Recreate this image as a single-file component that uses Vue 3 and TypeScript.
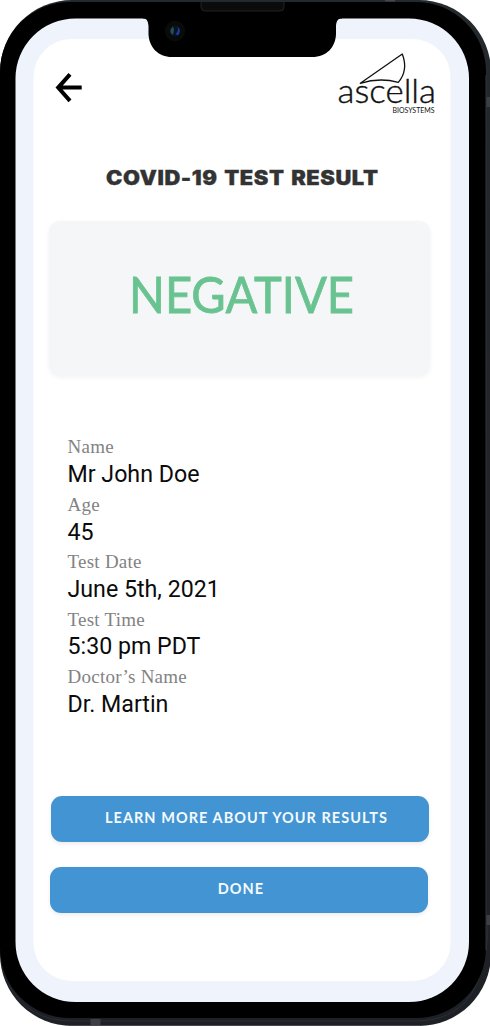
<script setup lang="ts">
interface Detail {
  label: string
  value: string
}

const details: Detail[] = [
  { label: 'Name', value: 'Mr John Doe' },
  { label: 'Age', value: '45' },
  { label: 'Test Date', value: 'June 5th, 2021' },
  { label: 'Test Time', value: '5:30 pm PDT' },
  { label: 'Doctor’s Name', value: 'Dr. Martin' },
]
</script>

<template>
  <div class="phone">
    <svg class="shell" viewBox="0 0 490 1026" aria-hidden="true">
      <defs>
        <linearGradient id="edge" x1="0" y1="0" x2="0" y2="1">
          <stop offset="0" stop-color="#24292d" />
          <stop offset="1" stop-color="#1d2024" />
        </linearGradient>
      </defs>
      <rect x="0" y="0" width="491" height="1026" rx="72" fill="url(#edge)" />
      <path d="M70 1025.5H420" stroke="#4b464e" stroke-width="1" />
      <path d="M488 920Q488 1021 416 1021H72Q28 1021 9 985" fill="none" stroke="#2b2f34" stroke-width="1" />
      <rect x="0" y="2" width="486" height="1016" rx="70" fill="#000" />
      <path d="M486 75V950" stroke="#303439" stroke-width="1" />
      <path d="M385 .5h10" stroke="#43474b" stroke-width="2" />
      <rect x="90.500" y="1019" width="10" height="6" fill="#3c3f43" />
      <rect x="486.500" y="97" width="3.500" height="10" fill="#3c3f43" />
      <rect x="486.500" y="915" width="3.500" height="10" fill="#3c3f43" />
      <rect x="15.500" y="18.500" width="453.500" height="983.500" rx="60" fill="#eff3fc" />
      <rect x="33.500" y="39" width="417" height="942" rx="38" fill="#fff" />
      <path d="M143 17.500V18.500C147 18.500 148 21 148.500 26V34C149 47 158 57 172 57H312C327 57 335.500 47 336 34V26C336.500 21 337.500 18.500 342 18.500V17.500Z" fill="#000" />
      <path d="M201 2V7Q201 11 205 11H280Q284 11 284 7V2" fill="#0b0b0b" stroke="#222" stroke-width="1" />
      <circle cx="175" cy="31" r="10.300" fill="#0a0a0b" />
      <circle cx="175" cy="31" r="5.500" fill="#071323" />
      <path d="M173 26.500Q168 31 172.500 35Q175 31 173 26.500" fill="#20534f" />
      <path d="M177.500 26.500Q182 31 178 35.500L175.500 34Q179 31 177.500 26.500" fill="#183e9c" />
    </svg>

    <main class="screen">
      <header class="top">
        <button class="back" aria-label="Back">
          <svg width="28" height="30" viewBox="0 0 28 30">
            <path d="M26.700 14.600H4M15 1.400L3.200 14.600L15 27.800" fill="none" stroke="#000" stroke-width="4" />
          </svg>
        </button>
        <svg class="logo" width="105" height="68" viewBox="0 0 105 68" role="img" aria-label="ascella biosystems">
          <path d="M25.300 33.300L67.300 4C71.500 15 70 24.500 63.300 32.300C51 29 39 29 25.300 33.300Z" fill="none" stroke="#111" stroke-width="1.300" stroke-linejoin="round" />
          <text class="brand" x="2.500" y="53" textLength="98.500" lengthAdjust="spacingAndGlyphs">ascella</text>
          <text class="sub" x="57.500" y="62.500" textLength="42" lengthAdjust="spacingAndGlyphs">BIOSYSTEMS</text>
        </svg>
      </header>

      <svg class="title" width="280" height="24" viewBox="0 0 280 24">
        <text x="1" y="19.600" textLength="272.500" lengthAdjust="spacingAndGlyphs">COVID-19 TEST RESULT</text>
      </svg>

      <section class="result">
        <svg width="240" height="70" viewBox="0 0 240 70">
          <text x="0" y="45.500" textLength="225" lengthAdjust="spacingAndGlyphs">NEGATIVE</text>
        </svg>
      </section>

      <dl class="details">
        <template v-for="item in details" :key="item.label">
          <dt>{{ item.label }}</dt>
          <dd>{{ item.value }}</dd>
        </template>
      </dl>

      <div class="actions">
        <button class="action more"><span>LEARN MORE ABOUT YOUR RESULTS</span></button>
        <button class="action done"><span>DONE</span></button>
      </div>
    </main>
  </div>
</template>

<style>
body {
  margin: 0;
  background: #fff;
}
</style>

<style scoped>
.phone {
  position: relative;
  width: 490px;
  height: 1026px;
  overflow: hidden;
}
.shell {
  position: absolute;
  inset: 0;
  width: 490px;
  height: 1026px;
}
.screen {
  position: relative;
  box-sizing: border-box;
  height: 1026px;
  padding: 50px 50px 0 49px;
  display: flex;
  flex-direction: column;
}
.top {
  display: flex;
  justify-content: space-between;
  height: 115px;
}
.back {
  width: 28px;
  height: 30px;
  margin: 23px 0 0 6px;
  padding: 0;
  border: 0;
  background: none;
}
.back svg {
  display: block;
}
.logo,
.title,
.result svg {
  overflow: visible;
}
.brand {
  font: 300 34px Lato, sans-serif;
  fill: #111;
  stroke: #111;
  stroke-width: 0.400px;
}
.sub {
  font: 7.600px Lato, sans-serif;
  fill: #111;
}
.title {
  margin-left: 56px;
  flex: none;
}
.title text {
  font: 900 19.500px Inter, sans-serif;
  letter-spacing: 0.500px;
  word-spacing: 1.500px;
  fill: #333;
  stroke: #333;
  stroke-width: 0.300px;
}
.result {
  box-sizing: border-box;
  width: 381.500px;
  height: 154px;
  margin: 32px 0 0 -0.500px;
  padding: 46px 0 0 80px;
  border-radius: 11px;
  background: #f4f6f8;
  box-shadow: 0 2px 5px rgba(0, 0, 0, 0.060);
}
.result svg {
  display: block;
}
.result text {
  font: 50px Lato, sans-serif;
  fill: #69c391;
  stroke: #69c391;
  stroke-width: 0.800px;
}
.details {
  margin: 56px 0 0 18.500px;
  display: grid;
  grid-template-rows: 29px 29px 29px 28px 29px 29px 28px 29px 29px 28px;
}
.details dt {
  margin: 0;
  font: 19px/31px "Liberation Serif", serif;
  letter-spacing: 0.250px;
  color: #828282;
}
.details dd {
  margin: 0;
  font: 23.200px/28px Roboto, sans-serif;
  color: #0b0b0b;
}
.actions {
  margin-top: 77.500px;
  display: flex;
  flex-direction: column;
  gap: 25px;
}
.action {
  width: 378px;
  height: 46px;
  padding: 0 0 1px;
  border: 0;
  border-radius: 11px;
  background: #4294d2;
  color: #f5faff;
  box-shadow: 0 2px 4px rgba(0, 0, 0, 0.080);
  font: 700 14.500px/20px Lato, sans-serif;
  letter-spacing: 1.050px;
  white-space: nowrap;
}
.more {
  margin-left: 1.500px;
  padding-left: 14px;
}
.done {
  margin-left: 0.500px;
  padding-left: 5px;
}
</style>
